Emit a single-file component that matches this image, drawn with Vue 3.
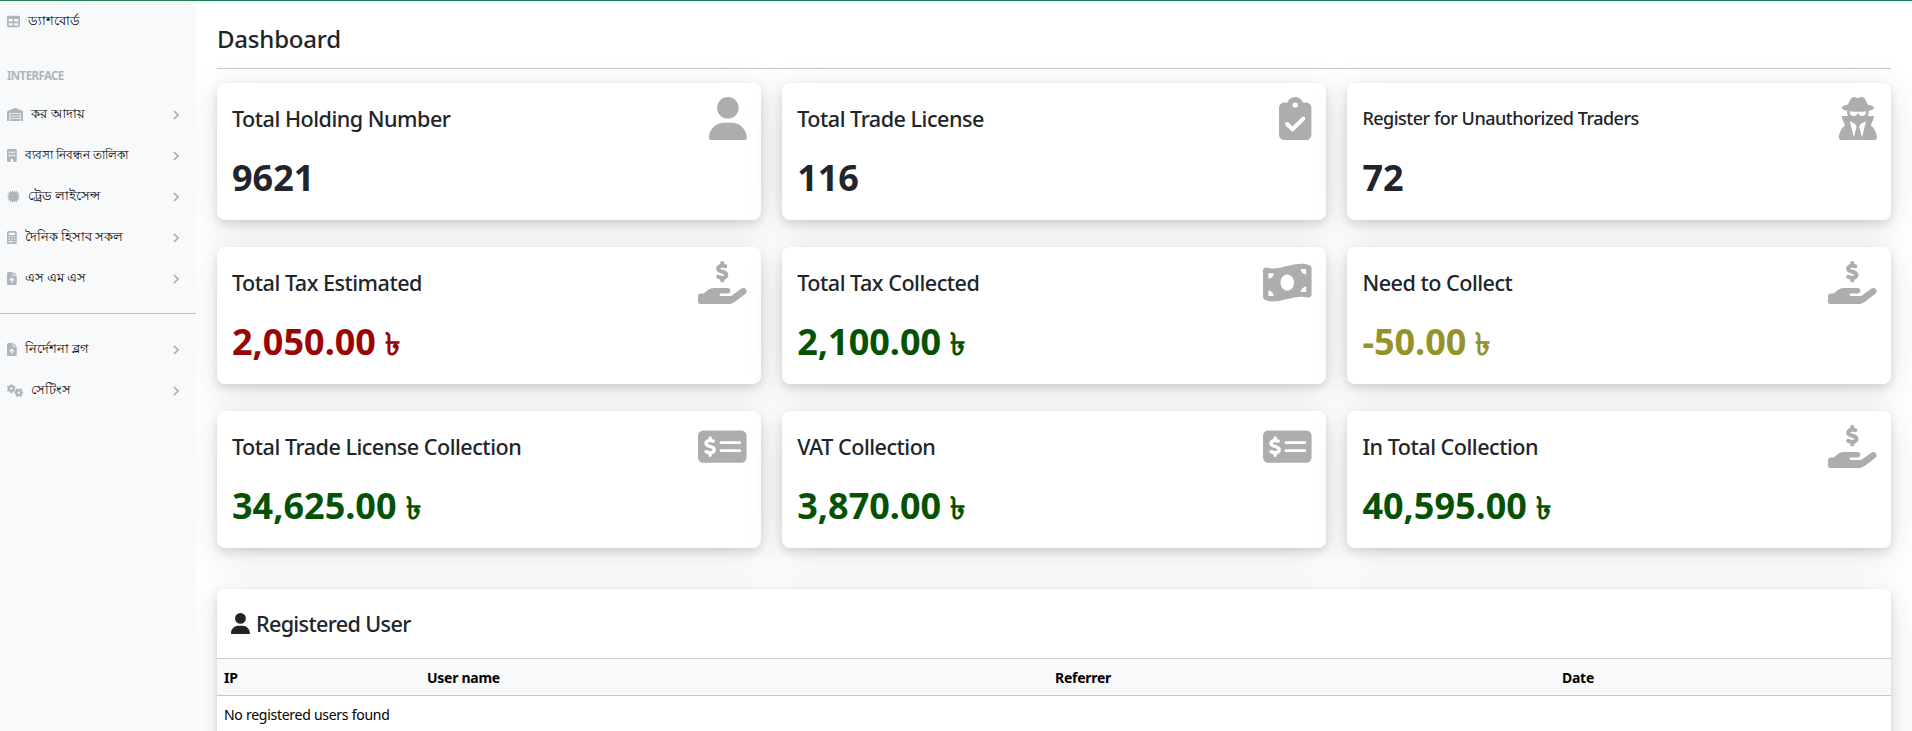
<template>
  <div class="layout">
    <!-- Sidebar -->
    <nav class="sidebar">
      <a class="nav-link">
        <svg class="nav-icon" :viewBox="icons.table.box"><path :d="icons.table.d" /></svg>
        <span class="nav-text">ড্যাশবোর্ড</span>
      </a>
      <div class="nav-heading">INTERFACE</div>
      <a v-for="item in mainItems" :key="item.label" class="nav-link">
        <svg class="nav-icon" :viewBox="icons[item.icon].box"><path :d="icons[item.icon].d" fill-rule="evenodd" /></svg>
        <span class="nav-text" :class="{ tight: item.tight }">{{ item.label }}</span>
        <svg class="nav-arrow" viewBox="0 0 6 10"><path d="M1 1l4 4-4 4" /></svg>
      </a>
      <hr class="nav-divider" />
      <a v-for="item in extraItems" :key="item.label" class="nav-link">
        <svg class="nav-icon" :viewBox="icons[item.icon].box"><path :d="icons[item.icon].d" fill-rule="evenodd" /></svg>
        <span class="nav-text">{{ item.label }}</span>
        <svg class="nav-arrow" viewBox="0 0 6 10"><path d="M1 1l4 4-4 4" /></svg>
      </a>
    </nav>

    <!-- Content -->
    <main class="content">
      <h1 class="page-title">Dashboard</h1>

      <div class="card-grid">
        <div v-for="card in cards" :key="card.title" class="stat-card">
          <div class="stat-head">
            <h5 class="stat-title" :class="{ small: card.small }">{{ card.title }}</h5>
            <svg class="stat-icon" :viewBox="icons[card.icon].box"><path :d="icons[card.icon].d" /></svg>
          </div>
          <div class="stat-value" :class="card.tone">
            {{ card.value }}<span v-if="card.taka" class="taka">৳</span>
          </div>
        </div>
      </div>

      <section class="user-card">
        <div class="user-head">
          <svg class="user-icon" :viewBox="icons.user.box"><path :d="icons.user.d" /></svg>
          <h5 class="user-title">Registered User</h5>
        </div>
        <table class="user-table">
          <thead>
            <tr>
              <th class="col-ip">IP</th>
              <th class="col-name">User name</th>
              <th class="col-ref">Referrer</th>
              <th>Date</th>
            </tr>
          </thead>
          <tbody>
            <tr>
              <td colspan="4">No registered users found</td>
            </tr>
          </tbody>
        </table>
      </section>
    </main>
  </div>
</template>

<script setup>
const icons = {
  table: {
    box: '0 0 512 512',
    d: 'M64 256V160H224v96H64zm0 64H224v96H64V320zm224 96V320H448v96H288zM448 256H288V160H448v96zM64 32C28.7 32 0 60.7 0 96V416c0 35.3 28.7 64 64 64H448c35.3 0 64-28.7 64-64V96c0-35.3-28.7-64-64-64H64z',
  },
  warehouse: {
    box: '0 0 640 512',
    d: 'M0 488V171.3c0-26.2 15.9-49.7 40.2-59.4L308.1 4.8c7.6-3.1 16.1-3.1 23.8 0L599.8 111.9c24.3 9.7 40.2 33.3 40.2 59.4V488c0 13.3-10.7 24-24 24H568c-13.3 0-24-10.7-24-24V224c0-17.7-14.3-32-32-32H128c-17.7 0-32 14.3-32 32V488c0 13.3-10.7 24-24 24H24c-13.3 0-24-10.7-24-24zm488 24l-336 0c-13.3 0-24-10.7-24-24V432H512l0 56c0 13.3-10.7 24-24 24zM128 400V336H512v64H128zm0-96V224H512l0 80H128z',
  },
  building: {
    box: '0 0 384 512',
    d: 'M48 0C21.5 0 0 21.5 0 48V464c0 26.5 21.5 48 48 48h96V432c0-26.5 21.5-48 48-48s48 21.5 48 48v80h96c26.5 0 48-21.5 48-48V48c0-26.5-21.5-48-48-48H48zM64 224h64v64H64zM160 224h64v64h-64zM256 224h64v64h-64zM64 96h64v64H64zM160 96h64v64h-64zM256 96h64v64h-64z',
  },
  certificate: {
    box: '0 0 512 512',
    d: 'M256 84L296 0L330 88L400 14L396 112L496 110L424 180L512 216L440 256L512 296L424 332L496 402L396 400L400 498L330 424L296 512L256 428L216 512L182 424L112 498L116 400L16 402L88 332L0 296L72 256L0 216L88 180L16 110L116 112L112 14L182 88L216 0z',
  },
  calculator: {
    box: '0 0 384 512',
    d: 'M64 0C28.7 0 0 28.7 0 64V448c0 35.3 28.7 64 64 64H320c35.3 0 64-28.7 64-64V64c0-35.3-28.7-64-64-64H64zM96 64H288c17.7 0 32 14.3 32 32v32c0 17.7-14.3 32-32 32H96c-17.7 0-32-14.3-32-32V96c0-17.7 14.3-32 32-32zM64 200h48v48H64zM168 200h48v48h-48zM272 200h48v48h-48zM64 296h48v48H64zM168 296h48v48h-48zM272 296h48v48h-48zM64 392h152v48H64zM272 392h48v48h-48z',
  },
  fileUp: {
    box: '0 0 384 512',
    d: 'M64 0C28.7 0 0 28.7 0 64V448c0 35.3 28.7 64 64 64H320c35.3 0 64-28.7 64-64V160H256c-17.7 0-32-14.3-32-32V0H64zM256 0V128H384L256 0zM216 408c0 13.3-10.7 24-24 24s-24-10.7-24-24V305.9l-31 31c-9.4 9.4-24.6 9.4-33.9 0s-9.4-24.6 0-33.9l72-72c9.4-9.4 24.6-9.4 33.9 0l72 72c9.4 9.4 9.4 24.6 0 33.9s-24.6 9.4-33.9 0l-31-31V408z',
  },
  gears: {
    box: '0 0 640 512',
    d: 'M128 8h80l12 50 30 16 52-16 38 66-38 34v44l38 34-38 66-52-16-30 16-12 50h-80l-12-50-30-16-52 16-38-66 38-34v-44l-38-34 38-66 52 16 30-16zM168 130a48 48 0 1 0 0 96a48 48 0 1 0 0-96zM638 300v80l-50 12-16 30 16 52-66 38-34-38h-44l-34 38-66-38 16-52-16-30-50-12v-80l50-12 16-30-16-52 66-38 34 38h44l34-38 66 38-16 52 16 30zM466 292a48 48 0 1 0 0 96a48 48 0 1 0 0-96z',
  },
  user: {
    box: '0 0 448 512',
    d: 'M224 256A128 128 0 1 0 224 0a128 128 0 1 0 0 256zm-45.7 48C79.8 304 0 383.8 0 482.3C0 498.7 13.3 512 29.7 512H418.3c16.4 0 29.7-13.3 29.7-29.7C448 383.8 368.2 304 269.7 304H178.3z',
  },
  clipboard: {
    box: '0 0 384 512',
    d: 'M192 0c-41.8 0-77.4 26.7-90.5 64H64C28.7 64 0 92.7 0 128V448c0 35.3 28.7 64 64 64H320c35.3 0 64-28.7 64-64V128c0-35.3-28.7-64-64-64H282.5C269.4 26.7 233.8 0 192 0zm0 64a32 32 0 1 1 0 64 32 32 0 1 1 0-64zM305 273L177 401c-9.4 9.4-24.6 9.4-33.9 0L79 337c-9.4-9.4-9.4-24.6 0-33.9s24.6-9.4 33.9 0l47 47L271 239c9.4-9.4 24.6-9.4 33.9 0s9.4 24.6 0 33.9z',
  },
  secret: {
    box: '0 0 448 512',
    d: 'M224 16c-6.7 0-10.8-2.8-15.5-6.1C201.9 5.4 194 0 176 0c-30.5 0-52 43.7-66 89.4C62.7 98.1 32 112.2 32 128c0 14.3 25 27.1 64.6 35.9c-.4 4-.6 8-.6 12.1c0 17 3.3 33.2 9.3 48H45.4C38 224 32 230 32 237.4c0 1.7 .3 3.4 1 5l38.8 96.9C28.2 371.8 0 423.8 0 482.3C0 498.7 13.3 512 29.7 512H418.3c16.4 0 29.7-13.3 29.7-29.7c0-58.5-28.2-110.4-71.7-143L415 242.4c.6-1.6 1-3.3 1-5c0-7.4-6-13.4-13.4-13.4H342.7c6-14.8 9.3-31 9.3-48c0-4.1-.2-8.1-.6-12.1C391 155.1 416 142.3 416 128c0-15.8-30.7-29.9-78-38.6C324 43.7 302.5 0 272 0c-18 0-25.9 5.4-32.5 9.9c-4.8 3.3-8.8 6.1-15.5 6.1zm56 208H267.6c-16.5 0-31.1-10.6-36.3-26.2c-2.3-7-12.2-7-14.5 0c-5.2 15.6-19.9 26.2-36.3 26.2H168c-22.1 0-40-17.9-40-40V169.6c28.2 4.1 61 6.4 96 6.4s67.8-2.3 96-6.4V184c0 22.1-17.9 40-40 40zm-88 96l16 32L176 480 128 288l64 32zm128-32L272 480 240 352l16-32 64-32z',
  },
  hand: {
    box: '0 0 576 512',
    d: 'M312 24V34.5c6.4 1.2 12.6 2.7 18.2 4.2c12.8 3.4 20.4 16.6 17 29.4s-16.6 20.4-29.4 17c-10.9-2.9-21.1-4.9-30.2-5c-7.3-.1-14.7 1.7-19.4 4.4c-2.1 1.3-3.1 2.4-3.5 3c-.3 .5-.7 1.2-.7 2.8c0 .3 0 .5 0 .6c.2 .2 .9 1.2 3.3 2.6c5.8 3.5 14.4 6.2 27.4 10.1l.9 .3c11.1 3.3 25.9 7.8 37.9 15.3c13.7 8.6 26.1 22.9 26.4 44.9c.3 22.5-11.4 38.9-26.7 48.5c-6.7 4.1-13.9 7-21.3 8.8V232c0 13.3-10.7 24-24 24s-24-10.7-24-24V220.6c-9.5-2.3-18.2-5.3-25.6-7.8c-2.1-.7-4.1-1.4-6-2c-12.6-4.2-19.4-17.8-15.2-30.4s17.8-19.4 30.4-15.2c2.6 .9 5 1.7 7.3 2.5c13.6 4.6 23.4 7.9 33.9 8.3c8 .3 15.1-1.6 19.2-4.1c1.9-1.2 2.8-2.2 3.2-2.9c.4-.6 .9-1.8 .8-4.1l0-.2c0-1 0-2.1-4-4.6c-5.7-3.6-14.3-6.4-27.1-10.3l-1.9-.6c-10.8-3.2-25-7.5-36.4-14.4c-13.5-8.1-26.5-22-26.6-44.1c-.1-22.9 12.9-38.6 27.7-47.4c6.4-3.8 13.3-6.4 20.2-8.2V24c0-13.3 10.7-24 24-24s24 10.7 24 24zM568.2 336.3c13.1 17.8 9.3 42.8-8.5 55.9L433.1 485.5c-23.4 17.2-51.6 26.5-80.7 26.5H32c-17.7 0-32-14.3-32-32V416c0-17.7 14.3-32 32-32H68.8l44.9-36c22.7-18.2 50.9-28 80-28H352c17.7 0 32 14.3 32 32s-14.3 32-32 32H272c-8.8 0-16 7.2-16 16s7.2 16 16 16H392.6l119.7-88.2c17.8-13.1 42.8-9.3 55.9 8.5z',
  },
  bill: {
    box: '0 0 576 512',
    d: 'M0 112.5V422.3c0 18 10.1 35 27 41.3c87 32.5 174 10.3 261-11.9c79.8-20.3 159.6-40.7 239.3-18.9c23 6.3 48.7-9.5 48.7-33.4V89.7c0-18-10.1-35-27-41.3C462 15.9 375 38.1 288 60.3C208.2 80.6 128.4 100.9 48.7 79.1C25.6 72.8 0 88.6 0 112.5zM288 352c-44.2 0-80-43-80-96s35.8-96 80-96s80 43 80 96s-35.8 96-80 96zM64 352c35.3 0 64 28.7 64 64H64V352zm64-208c0 35.3-28.7 64-64 64V144h64zM512 304v64H448c0-35.3 28.7-64 64-64zM448 96h64v64c-35.3 0-64-28.7-64-64z',
  },
  check: {
    box: '0 0 576 512',
    d: 'M64 64C28.7 64 0 92.7 0 128V384c0 35.3 28.7 64 64 64H512c35.3 0 64-28.7 64-64V128c0-35.3-28.7-64-64-64H64zM272 192H496c8.8 0 16 7.2 16 16s-7.2 16-16 16H272c-8.8 0-16-7.2-16-16s7.2-16 16-16zM256 304c0-8.8 7.2-16 16-16H496c8.8 0 16 7.2 16 16s-7.2 16-16 16H272c-8.8 0-16-7.2-16-16zM164 152v13.9c7.5 1.2 14.6 2.9 21.1 4.7c10.7 2.8 17 13.8 14.2 24.5s-13.8 17-24.5 14.2c-11-2.9-21.6-5-31.2-5.2c-7.9-.1-16 1.8-21.5 5c-4.8 2.8-6.2 5.6-6.2 9.3c0 1.8 .1 3.5 5.3 6.7c6.3 3.8 15.5 6.7 28.3 10.5l.7 .2c11.2 3.4 25.6 7.7 37.1 15c12.9 8.1 24.3 21.3 24.6 41.6c.3 20.9-10.5 36.1-24.8 45c-7.2 4.5-15.2 7.3-23.2 9V360c0 11-9 20-20 20s-20-9-20-20V345.4c-10.3-2.2-20-5.5-28.2-8.4c-2.1-.7-4.1-1.4-6.1-2.1c-10.5-3.5-16.1-14.8-12.6-25.3s14.8-16.1 25.3-12.6c2.5 .8 4.9 1.7 7.2 2.4c13.6 4.6 24 8.1 35.1 8.5c8.6 .3 16.5-1.6 21.4-4.7c4.1-2.5 6-5.5 5.9-10.5c0-2.9-.8-5-5.9-8.2c-6.3-4-15.4-6.9-28-10.7l-1.7-.5c-10.9-3.3-24.6-7.4-35.6-14c-12.7-7.7-24.6-20.5-24.7-40.7c-.1-21.1 11.8-35.7 25.8-43.9c6.9-4.1 14.5-6.8 22.2-8.5V152c0-11 9-20 20-20s20 9 20 20z',
  },
}

const mainItems = [
  { label: 'কর আদায়', icon: 'warehouse' },
  { label: 'ব্যবসা নিবন্ধন তালিকা', icon: 'building', tight: true },
  { label: 'ট্রেড লাইসেন্স', icon: 'certificate' },
  { label: 'দৈনিক হিসাব সকল', icon: 'calculator' },
  { label: 'এস এম এস', icon: 'fileUp' },
]

const extraItems = [
  { label: 'নির্দেশনা ব্লগ', icon: 'fileUp' },
  { label: 'সেটিংস', icon: 'gears' },
]

const cards = [
  { title: 'Total Holding Number', value: '9621', icon: 'user' },
  { title: 'Total Trade License', value: '116', icon: 'clipboard' },
  { title: 'Register for Unauthorized Traders', value: '72', icon: 'secret', small: true },
  { title: 'Total Tax Estimated', value: '2,050.00', icon: 'hand', tone: 'red', taka: true },
  { title: 'Total Tax Collected', value: '2,100.00', icon: 'bill', tone: 'green', taka: true },
  { title: 'Need to Collect', value: '-50.00', icon: 'hand', tone: 'olive', taka: true },
  { title: 'Total Trade License Collection', value: '34,625.00', icon: 'check', tone: 'green', taka: true },
  { title: 'VAT Collection', value: '3,870.00', icon: 'check', tone: 'green', taka: true },
  { title: 'In Total Collection', value: '40,595.00', icon: 'hand', tone: 'green', taka: true },
]
</script>

<style>
body {
  overflow: hidden;
  background: #fff;
}
</style>

<style scoped>
.layout {
  display: flex;
  height: 731px;
  box-sizing: border-box;
  overflow: hidden;
  border-top: 1px solid #198754;
  font-family: "Noto Sans", "Open Sans", sans-serif;
  color: #212529;
}

/* Sidebar, kept above the card shadows */
.sidebar {
  position: relative;
  z-index: 1;
  width: 196px;
  flex-shrink: 0;
  background: #f8f9fa;
}

.nav-link {
  display: flex;
  align-items: center;
  height: 41px;
  padding: 0 17px 0 7px;
}

.nav-icon {
  height: 13px;
  flex-shrink: 0;
  margin-right: 8px;
  fill: #adb5bd;
}

.nav-text {
  padding-bottom: 1px;
  font-size: 12.6px;
  line-height: 20px;
  color: #000;
  white-space: nowrap;
}

.nav-text.tight { font-size: 12.2px; }

.nav-arrow {
  width: 6px;
  height: 10px;
  margin-left: auto;
  fill: none;
  stroke: #a6adb4;
  stroke-width: 1.7;
}

.nav-heading {
  height: 52px;
  padding: 26px 0 0 7px;
  box-sizing: border-box;
  font-size: 11.5px;
  line-height: 16px;
  font-weight: 700;
  letter-spacing: -0.6px;
  color: #adb5bd;
}

.nav-divider {
  margin: 14px 0 15px;
  border: 0;
  border-top: 1px solid #bfc2c5;
}

/* Content */
.content {
  flex: 1;
  padding: 0 21px;
}

.page-title {
  margin: 0 0 14px;
  height: 68px;
  box-sizing: border-box;
  border-bottom: 1px solid #c8c8c9;
  padding-top: 20px;
  font-size: 24px;
  line-height: 36px;
  font-weight: 500;
  letter-spacing: -0.2px;
}

.card-grid {
  display: grid;
  grid-template-columns: repeat(3, 1fr);
  gap: 27px 21.6px;
}

.stat-card {
  height: 137px;
  box-sizing: border-box;
  padding: 14px 14px 14px 15px;
  border-radius: 8px;
  background: #fff;
  box-shadow: 0 4px 9px rgba(33, 37, 41, 0.14), 0 7px 36px rgba(33, 37, 41, 0.13);
}

.stat-head {
  display: flex;
  justify-content: space-between;
}

.stat-title {
  margin: 0;
  padding-top: 7px;
  font-size: 21.6px;
  line-height: 30px;
  font-weight: 500;
  letter-spacing: -0.5px;
}

.stat-title.small {
  padding-top: 6px;
  font-size: 18px;
}

.stat-icon {
  height: 43.2px;
  fill: #adadad;
}

.stat-value {
  margin-top: 14px;
  font-size: 36px;
  line-height: 48px;
  font-weight: 700;
}

.taka {
  margin-left: 9px;
  font-size: 31px;
  font-weight: 600;
}

.red   { color: #990505; }
.green { color: #055205; }
.olive { color: #959229; }

/* Registered users */
.user-card {
  margin-top: 41px;
  height: 240px;
  border-radius: 6px;
  background: #fff;
  box-shadow: 0 4px 9px rgba(33, 37, 41, 0.14), 0 7px 36px rgba(33, 37, 41, 0.13);
}

.user-head {
  display: flex;
  align-items: center;
  height: 69px;
  padding-left: 14px;
}

.user-icon {
  height: 21.6px;
  margin-right: 6px;
  fill: #212529;
}

.user-title {
  margin: 0;
  font-size: 21.6px;
  line-height: 30px;
  font-weight: 500;
  letter-spacing: -0.65px;
}

.user-table {
  width: 100%;
  table-layout: fixed;
  border-collapse: collapse;
  font-size: 14px;
  letter-spacing: -0.27px;
  color: #000;
}

.user-table th {
  height: 36px;
  padding: 0 7px;
  border-top: 1px solid #cbccce;
  border-bottom: 1px solid #c6c7c9;
  background: #f8f9fb;
  text-align: left;
}

.user-table td {
  height: 36px;
  padding: 0 7px;
}

.col-ip   { width: 189px; }
.col-name { width: 614px; }
.col-ref  { width: 493px; }
</style>
